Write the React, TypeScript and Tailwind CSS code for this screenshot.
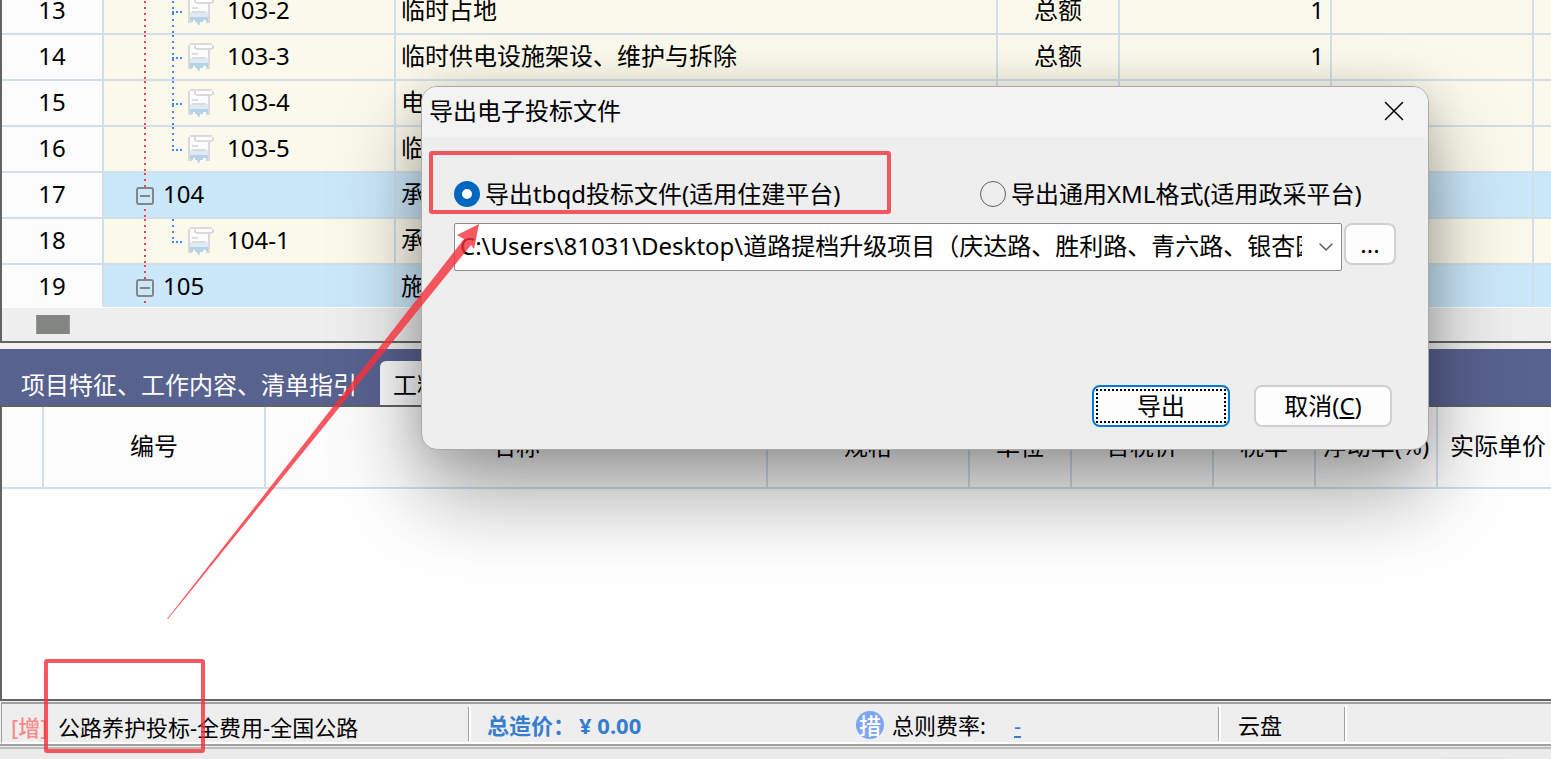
import { useState } from 'react'
import { ChevronDown, X } from 'lucide-react'

type RowData = {
  no: number
  code: string
  name: string
  unit?: string
  qty?: string
  parent?: boolean
  last?: boolean
}

const rows: RowData[] = [
  { no: 13, code: '103-2', name: '临时占地', unit: '总额', qty: '1' },
  { no: 14, code: '103-3', name: '临时供电设施架设、维护与拆除', unit: '总额', qty: '1' },
  { no: 15, code: '103-4', name: '电' },
  { no: 16, code: '103-5', name: '临', last: true },
  { no: 17, code: '104', name: '承', parent: true },
  { no: 18, code: '104-1', name: '承', last: true },
  { no: 19, code: '105', name: '施', parent: true },
]

const detailColumns = [
  { label: '', width: 'w-[42px]' },
  { label: '编号', width: 'w-[222px]' },
  { label: '名称', width: 'w-[502px]' },
  { label: '规格', width: 'w-[202px]' },
  { label: '单位', width: 'w-[102px]' },
  { label: '含税价', width: 'w-[142px]' },
  { label: '税率', width: 'w-[102px]' },
  { label: '浮动率(%)', width: 'w-[122px]' },
  { label: '实际单价', width: 'w-[122px]' },
]

const filePath = 'C:\\Users\\81031\\Desktop\\道路提档升级项目（庆达路、胜利路、青六路、银杏园路）'

function TreeGutter({ parent, last }: { parent?: boolean; last?: boolean }) {
  if (parent) {
    return (
      <svg width="50" height="44" className="shrink-0 overflow-visible" fill="none">
        <path d="M41 0V46" stroke="#f8414b" strokeWidth="2" strokeDasharray="2 4" />
        <rect x="33" y="15" width="16" height="16" rx="2" fill="#cbe8fa" stroke="#858585" strokeWidth="2" />
        <path d="M36 23H46" stroke="#858585" strokeWidth="2" />
      </svg>
    )
  }
  return (
    <svg width="110" height="44" className="shrink-0 overflow-visible" fill="none">
      <path d="M41 0V46" stroke="#f8414b" strokeWidth="2" strokeDasharray="2 4" />
      <path d={last ? 'M69 0V22' : 'M69 0V46'} stroke="#4286f5" strokeWidth="2" strokeDasharray="2 4" />
      <path d="M68 23H78" stroke="#4286f5" strokeWidth="2" strokeDasharray="2 2" />
      <ReceiptIcon />
    </svg>
  )
}

function ReceiptIcon() {
  return (
    <g transform="translate(84 8)" shapeRendering="crispEdges">
      <path d="M2 2H21V16H2Z" fill="#fcfcfd" />
      <path d="M2 15H21V20H2Z" fill="#dfeaf3" />
      <path d="M2 20H21V25H18V23H15V25H12V27H9V25H7V23H5V25H2Z" fill="#b4d3e6" />
      <path d="M7 2H24V5H7Z" fill="#fff" />
      <path d="M2 0H24V2H2ZM0 2H2V26H0ZM24 2H26V6H24ZM6 2H8V6H6ZM8 5H24V7H8ZM20 7H22V26H20Z" fill="#dadadc" />
      <path d="M4 10H10V12H4ZM4 14H18V16H4Z" fill="#dcdcde" />
      <path d="M2 24H4V26H2ZM10 26H12V28H10ZM18 24H20V26H18Z" fill="#ced9e1" />
    </g>
  )
}

function BillGrid() {
  return (
    <section className="border-b-2 border-l-2 border-[#626463] bg-[#eee]">
      <div className="h-[308px] overflow-hidden border-b border-white">
        <table className="-mt-[11px] w-full table-fixed border-separate border-spacing-0">
          <colgroup>
            <col className="w-[102px]" />
            <col className="w-[292px]" />
            <col className="w-[602px]" />
            <col className="w-[122px]" />
            <col className="w-[212px]" />
            <col className="w-[202px]" />
            <col />
          </colgroup>
          <tbody>
            {rows.map((row) => (
              <tr
                key={row.no}
                className={`h-[46px] *:border-r-2 *:border-b-2 *:border-[#d2dfe8] *:p-0 *:last:border-r-0 ${row.parent ? 'bg-[#cbe8fa]' : 'bg-[#fbf9eb]'}`}
              >
                <th scope="row" className="bg-[#fcfcfc] text-center font-normal">
                  <div className="pb-0.5">{row.no}</div>
                </th>
                <td>
                  <div className="flex h-[44px] items-center">
                    <TreeGutter parent={row.parent} last={row.last} />
                    <span className={row.parent ? 'ml-[9px] pb-0.5' : 'ml-[13px] pb-0.5'}>{row.code}</span>
                  </div>
                </td>
                <td>
                  <div className="truncate pb-0.5 pl-[5px]">{row.name}</div>
                </td>
                <td>
                  <div className="pb-0.5 text-center">{row.unit}</div>
                </td>
                <td>
                  <div className="pr-[6px] pb-0.5 text-right">{row.qty}</div>
                </td>
                <td />
                <td />
              </tr>
            ))}
          </tbody>
        </table>
      </div>
      <div className="flex h-[33px] items-center pl-[34px]">
        <div className="h-[19px] w-[34px] border-x border-[#999] bg-[#838583]" />
      </div>
    </section>
  )
}

function DetailPanel() {
  return (
    <section className="mt-[6px] flex min-h-0 flex-1 flex-col">
      <div role="tablist" className="flex h-[58px] items-end border-b-2 border-[#626463] bg-[#58628f]">
        <button role="tab" aria-selected="false" className="h-[44px] pt-1 pr-[23px] pl-[21px] whitespace-nowrap text-white">
          项目特征、工作内容、清单指引
        </button>
        <button role="tab" aria-selected="true" className="h-[44px] rounded-t-md bg-[#fafafa] px-[13px] pt-1">
          工料机
        </button>
      </div>
      <div className="flex-1 overflow-hidden border-b-2 border-l-2 border-[#626463] bg-white">
        <table className="w-[1558px] table-fixed border-separate border-spacing-0">
          <thead>
            <tr className="h-[82px] bg-[#fcfcfc]">
              {detailColumns.map((col) => (
                <th
                  key={col.label}
                  scope="col"
                  className={`${col.width} border-r-2 border-b-2 border-[#d2dfe8] p-0 pb-0.5 text-center font-normal whitespace-nowrap`}
                >
                  {col.label}
                </th>
              ))}
            </tr>
          </thead>
        </table>
      </div>
    </section>
  )
}

function StatusBar() {
  return (
    <footer className="mt-px text-[22px] leading-8">
      <div className="ml-px flex h-[42px] border-t-2 border-b-2 border-l border-[#a0a0a0] border-b-white bg-[#eee] pt-px">
        <div className="flex w-[469px] items-center border-r-2 border-white">
          <div className="flex h-[34px] flex-1 items-center border-r border-[#a0a0a0] pt-[6px] pl-[9px] whitespace-nowrap">
            <span className="w-[47px] font-medium text-[#f78b8c]">[增]</span>
            <span>公路养护投标-全费用-全国公路</span>
          </div>
        </div>
        <div className="flex w-[750px] items-center border-r-2 border-white">
          <div className="flex h-[34px] flex-1 items-center border-r border-[#a0a0a0] pt-0.5 pl-4">
            <span className="w-[92px] font-bold whitespace-nowrap text-[#377dcf]">总造价：</span>
            <span className="w-[277px] font-bold text-[#377dcf]">¥ 0.00</span>
            <span className="flex size-7 items-center justify-center rounded-full bg-[#7da5f1] font-medium text-white">措</span>
            <span className="ml-2 w-[122px]">总则费率:</span>
            <a href="#rate" className="text-[#377dcf] underline">
              -
            </a>
          </div>
        </div>
        <div className="flex w-[126px] items-center border-r-2 border-white">
          <div className="flex h-[34px] flex-1 items-center border-r border-[#a0a0a0] pt-0.5 pl-[17px]">云盘</div>
        </div>
      </div>
      <div className="h-[5px] border-y-2 border-t-[#a0a0a0] border-b-[#bcbcbc] bg-[#eee]" />
      <div className="flex h-[10px] justify-end overflow-hidden bg-[#ececec] pt-2 pr-10">
        <div className="h-8 w-[74px] rounded-lg border-2 border-[#e4e4e4] bg-[#f8f8f8]" />
      </div>
    </footer>
  )
}

function ExportDialog() {
  const [format, setFormat] = useState('tbqd')
  const radio =
    'size-[26px] shrink-0 appearance-none rounded-full border border-[#606060] checked:border-8 checked:border-[#0067c0] checked:bg-white'

  return (
    <div
      role="dialog"
      aria-labelledby="export-title"
      className="absolute top-[86px] left-[421px] w-[1008px] overflow-hidden rounded-2xl border border-[#a9aaa8] bg-[#eee] shadow-[0_44px_88px_rgba(0,0,0,0.36),0_4px_40px_rgba(0,0,0,0.14)]"
    >
      <header className="flex h-[50px] items-center justify-between bg-[#f3f3f3] pr-[19px] pb-0.5 pl-[7px]">
        <h2 id="export-title">导出电子投标文件</h2>
        <button aria-label="关闭">
          <X size={34} strokeWidth={1.5} absoluteStrokeWidth className="-mr-0.5" />
        </button>
      </header>
      <form className="px-8 pt-[41px] pb-[22px]" onSubmit={(e) => e.preventDefault()}>
        <div className="grid grid-cols-[526px_1fr]">
          <label className="flex items-center gap-[5px] whitespace-nowrap">
            <input type="radio" name="format" className={radio} checked={format === 'tbqd'} onChange={() => setFormat('tbqd')} />
            导出tbqd投标文件(适用住建平台)
          </label>
          <label className="flex items-center gap-[5px] whitespace-nowrap">
            <input type="radio" name="format" className={radio} checked={format === 'xml'} onChange={() => setFormat('xml')} />
            导出通用XML格式(适用政采平台)
          </label>
        </div>
        <div className="mt-[13px] flex items-start gap-[2px]">
          <div className="grid min-w-0 flex-1 items-center">
            <select
              aria-label="导出路径"
              className="col-start-1 row-start-1 h-[48px] w-full min-w-0 appearance-none rounded-xs border border-[#8a8a8a] bg-white pr-[39px] pb-0.5 pl-[5px]"
            >
              <option>{filePath}</option>
            </select>
            <ChevronDown
              size={24}
              strokeWidth={1.5}
              absoluteStrokeWidth
              className="pointer-events-none col-start-1 row-start-1 mr-1 justify-self-end text-[#606060]"
            />
          </div>
          <button type="button" aria-label="浏览" className="h-[42px] w-[52px] rounded-lg border-2 border-[#d0d0d0] bg-[#fdfdfd]">
            ...
          </button>
        </div>
        <div className="mt-[114px] flex justify-end gap-6 pr-1">
          <button type="submit" className="h-[42px] w-[138px] rounded-lg border-2 border-[#0078d4] bg-[#fdfdfd] p-[2px]">
            <span className="flex h-full items-center justify-center border-2 border-dotted border-black">导出</span>
          </button>
          <button type="button" className="h-[42px] w-[138px] rounded-lg border-2 border-[#d0d0d0] bg-[#fdfdfd]">
            取消(<u>C</u>)
          </button>
        </div>
      </form>
    </div>
  )
}

function Annotations() {
  return (
    <svg width="1551" height="759" className="pointer-events-none absolute top-0 left-0" fill="none">
      <g opacity="0.8">
        <rect x="431" y="153" width="458" height="59" rx="1" stroke="#f5303b" strokeWidth="4" />
        <rect x="46" y="661" width="157" height="90" rx="1" stroke="#f5303b" strokeWidth="4" />
        <path d="M167 619L464 239L457 235L479 224L474 249L471 245L168 619Z" fill="#f5303b" />
      </g>
    </svg>
  )
}

export default function App() {
  return (
    <div className="relative flex h-screen flex-col overflow-hidden bg-[#f0f0ee] font-['Noto_Sans','Noto_Sans_CJK_SC',sans-serif] text-2xl leading-8 text-black">
      <BillGrid />
      <DetailPanel />
      <StatusBar />
      <ExportDialog />
      <Annotations />
    </div>
  )
}
